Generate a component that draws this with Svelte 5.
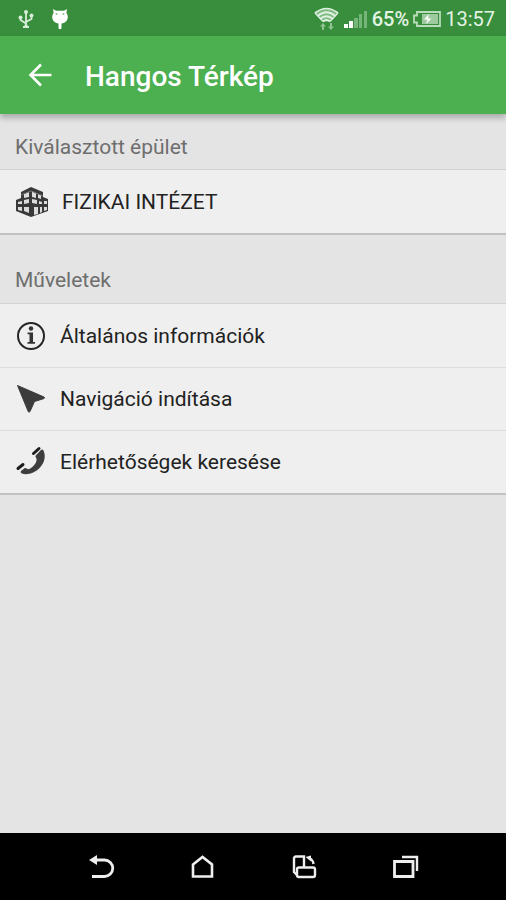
<script>
  const actions = [
    { id: 'info', label: 'Általános információk' },
    { id: 'navigate', label: 'Navigáció indítása' },
    { id: 'contacts', label: 'Elérhetőségek keresése' }
  ];
</script>

<div class="screen">
  <div class="status">
    <div class="group left">
      <svg width="16" height="20" viewBox="0 0 16 20" fill="none" stroke="#d8edd9" stroke-width="1.8" aria-hidden="true">
        <path d="M8 3v14M2.500 9v2L8 14.500M13.500 7v3L8 13M5 18h6" />
        <circle cx="8" cy="3" r="2" fill="#d8edd9" stroke="none" />
        <circle cx="2.500" cy="8.500" r="2" fill="#d8edd9" stroke="none" />
        <circle cx="13.500" cy="6.500" r="2" fill="#d8edd9" stroke="none" />
        <circle cx="8" cy="17" r="1.700" fill="#d8edd9" stroke="none" />
      </svg>
      <svg width="18" height="22" viewBox="0 0 18 22" aria-hidden="true">
        <path d="M2 1l3 1.800h8L16 1l-.6 4c1.900 2.500 1.900 5.500.1 8-1.500 1.800-3 2.200-5 2.400v4.800q-1.500 2-3 0v-4.800c-2-.2-3.500-.6-5-2.400C.7 10.500.7 7.500 2.600 5z" fill="#fff" />
        <circle cx="5.500" cy="6" r="1.100" fill="#8bc08d" />
        <circle cx="12.500" cy="6" r="1.100" fill="#8bc08d" />
      </svg>
    </div>
    <div class="group right">
      <svg width="26" height="24" viewBox="0 0 26 24" aria-hidden="true">
        <path d="M1 6Q12.500-3 24 6l-8 8.500h-7z" fill="#7fbb82" />
        <g fill="none" stroke="#dff0e0" stroke-width="1.700">
          <path d="M1 6Q12.500-3 24 6M3.500 9q9-7.500 18 0M6 12q6.500-5.500 13 0M9 14.500q3.500-3 7 0" />
          <path d="M1 6l8 8.500M24 6l-8 8.500" stroke-width="1.200" />
        </g>
        <path d="M9 16l3 3.500h-2v3.500H8v-3.500H6zM17 23l-3-3.500h2V16h2v3.500h2z" fill="#8fc492" />
      </svg>
      <svg width="24" height="18" viewBox="0 0 24 18" aria-hidden="true">
        <path d="M0 14h4v4H0zM5 11h4v7H5z" fill="#fff" />
        <path d="M10 8h4v10h-4zM15 4h3v14h-3zM20 1h3v17h-3z" fill="#76b579" />
      </svg>
      <span class="percent">65%</span>
      <svg width="28" height="16" viewBox="0 0 28 16" aria-hidden="true">
        <path d="M4 1h23v14H4v-3.500H1v-7h3z" fill="none" stroke="#b9dcba" stroke-width="1.800" />
        <path d="M9 3h16v10H9z" fill="#9dcb9f" />
        <path d="M16 3l-5 5.500h3.500L13 13l5.500-5.500H15z" fill="#fff" />
      </svg>
      <span>13:57</span>
    </div>
  </div>

  <header>
    <button class="back" aria-label="Vissza">
      <svg width="24" height="24" viewBox="0 0 24 24" fill="none" stroke="#fff" stroke-width="2.600" aria-hidden="true">
        <path d="M23.500 12H2.500M13 1.500L2.500 12 13 22.500" />
      </svg>
    </button>
    <h1>Hangos Térkép</h1>
  </header>

  <main>
    <h2 class="first">Kiválasztott épület</h2>
    <div class="card">
      <button class="row">
        <svg width="34" height="32" viewBox="0 0 34 32" aria-hidden="true">
          <path d="M16 1L6 6v6l-5 2v11l15 6 17-6V13l-5-2V6z" fill="#393939" />
          <path d="M9 8l5-2v5l-5 1zM17 5l4 2v5l-4-1zM23 8l3 1v4l-3-1zM3 16l4-1v3l-4 0zM9 14l5-1v4l-5 1zM17 13l5 1v4l-5-1zM24 15l3 1v2l-3 0zM29 15l3 0v3h-3zM3 21l4 0v4l-4-1zM9 21l5 0v6l-5-2zM19 21l4 0v7l-4 1zM25 21l2 0v5l-2 1zM29 21h3v3l-3 1z" fill="#dcdcdc" />
          <path d="M6 9l10-4 12 5" fill="none" stroke="#777" stroke-width="1" />
        </svg>
        <span>FIZIKAI INTÉZET</span>
      </button>
    </div>

    <h2>Műveletek</h2>
    <div class="card">
      {#each actions as action (action.id)}
        <button class="row">
          <svg width="32" height="32" viewBox="0 0 32 32" aria-hidden="true">
            {#if action.id === 'info'}
              <circle cx="16" cy="16" r="13" fill="none" stroke="#252525" stroke-width="2" />
              <circle cx="16" cy="8.500" r="2.200" fill="#333" />
              <path d="M12.500 12.500H18v9.500h2v1.800h-7.500V22h2v-7.700h-2z" fill="#333" />
            {:else if action.id === 'navigate'}
              <path d="M2.500 2.500L29 14q1.500 1-.5 1.700L19.500 18.500l-4.500 10q-1 1.500-1.800 0z" fill="#3c3c3c" stroke="#3c3c3c" stroke-linejoin="round" />
            {:else}
              <path d="M28.500 4.500c2.600 5.500 1 12.500-3.700 17.200-4.900 5-12.300 7.800-17.800 5.800-1.300-.5-1.800-1.500-1-2.400l3.200-2.600c1-.7 1.800-.5 2.800.2 1.300.8 2.500.4 4-.6 2.700-1.800 4.700-4.500 5.400-7 .5-1.600.1-2.600-.5-3.600-.6-1-.5-1.700.3-2.500l4.500-4.700c1-1 2.200-1 2.800.2z" fill="#3d3d3d" />
              <path d="M18.500 7.500l5.500-5M3 22.500l5-4" fill="none" stroke="#1c1c1c" stroke-width="3" stroke-linecap="round" />
            {/if}
          </svg>
          <span>{action.label}</span>
        </button>
      {/each}
    </div>
  </main>

  <nav>
    <button aria-label="Vissza">
      <svg width="28" height="28" viewBox="0 0 28 28" aria-hidden="true">
        <path d="M8 7h9.500a8 8 0 0 1 0 16.500H5" fill="none" stroke="#eee" stroke-width="2.800" />
        <path d="M2 7l8-5v10z" fill="#eee" />
      </svg>
    </button>
    <button aria-label="Kezdőképernyő">
      <svg width="28" height="28" viewBox="0 0 28 28" fill="none" stroke="#eee" stroke-width="2.600" aria-hidden="true">
        <path d="M5 11.500L14.500 4l9.500 7.500v12H5z" />
      </svg>
    </button>
    <button aria-label="Képernyő forgatása">
      <svg width="28" height="28" viewBox="0 0 28 28" fill="none" stroke="#eee" stroke-width="2.400" aria-hidden="true">
        <path d="M7 22l-3-3V5.500q0-2 2-2h8V14M19 5q4 1.500 4.500 6" />
        <rect x="7" y="14.500" width="18" height="9.500" rx="2" />
        <path d="M15.500 4l5.500-1.500v6z" fill="#eee" stroke="none" />
      </svg>
    </button>
    <button aria-label="Legutóbbi alkalmazások">
      <svg width="28" height="28" viewBox="0 0 28 28" fill="none" stroke="#eee" stroke-width="2.800" aria-hidden="true">
        <path d="M3.500 8.500h18.500v15H3.500z" />
        <path d="M11 4h15v14" stroke-width="2.400" />
      </svg>
    </button>
  </nav>
</div>

<style>
  :global(body) {
    margin: 0;
  }

  .screen {
    display: flex;
    flex-direction: column;
    min-height: 100vh;
    background: #e4e4e4;
    font-family: Roboto, 'Noto Sans', sans-serif;
  }

  svg {
    display: block;
    flex: none;
  }

  button {
    border: 0;
    padding: 0;
    background: none;
    font: inherit;
    color: inherit;
    cursor: pointer;
  }

  .status {
    display: flex;
    justify-content: space-between;
    height: 34px;
    padding: 2px 11px 0 18px;
    background: #388e3c;
    color: #e3f3e4;
    font-size: 20px;
    line-height: 24px;
  }

  .group {
    display: flex;
    align-items: center;
  }

  .left {
    gap: 17px;
  }

  .right {
    gap: 4px;
  }

  .percent {
    font-weight: 500;
  }

  header {
    display: flex;
    align-items: center;
    gap: 33px;
    height: 78px;
    padding: 0 28px;
    background: #4caf50;
    box-shadow: 0 4px 6px rgba(0, 0, 0, 0.25);
    color: #fff;
  }

  h1 {
    margin: 0;
    padding-top: 3px;
    font-size: 28px;
    line-height: 36px;
    font-weight: 500;
  }

  main {
    flex: 1;
  }

  h2 {
    margin: 0;
    padding: 32px 15px 10px;
    font-size: 21px;
    line-height: 26px;
    font-weight: 400;
    color: #6e6e6e;
  }

  .first {
    padding: 20px 15px 9px;
  }

  .card {
    background: #efefef;
    border-top: 1px solid #d2d2d2;
    border-bottom: 2px solid #c2c2c2;
  }

  .row {
    display: flex;
    align-items: center;
    gap: 13px;
    width: 100%;
    height: 63px;
    padding: 0 15px;
    font-size: 21px;
    line-height: 26px;
    color: #222;
    text-align: left;
  }

  .row + .row {
    border-top: 1px solid #dcdcdc;
  }

  nav {
    display: flex;
    height: 67px;
    padding: 0 10%;
    background: #000;
  }

  nav button {
    flex: 1;
    display: flex;
    align-items: center;
    justify-content: center;
  }
</style>
